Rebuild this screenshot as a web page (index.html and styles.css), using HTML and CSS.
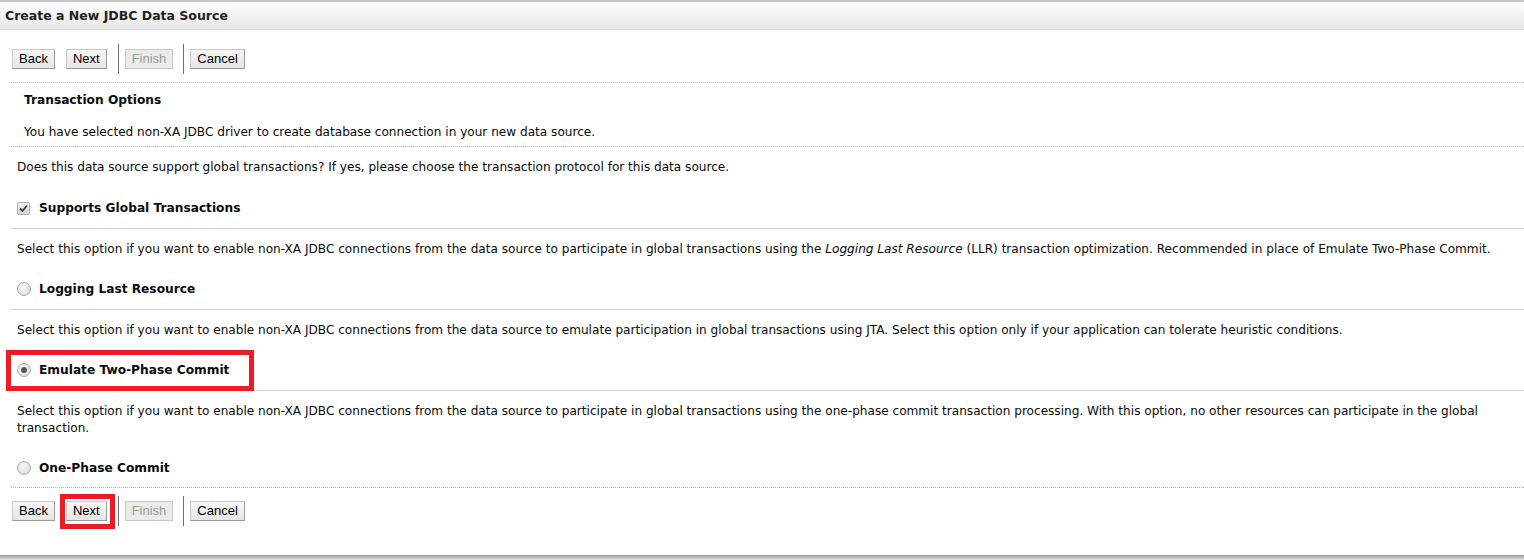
FILE: index.html
```html
<!DOCTYPE html>
<html>
<head>
<meta charset="utf-8">
<link rel="stylesheet" href="styles.css">
</head>
<body>
<div class="page">
  <div class="header"><span class="title">Create a New JDBC Data Source</span></div>
  <div class="content">
    <div class="toolbar">
      <span class="btn">Back</span>
      <span class="btn gap">Next</span>
      <span class="sep"></span>
      <span class="btn disabled">Finish</span>
      <span class="sep"></span>
      <span class="btn">Cancel</span>
    </div>
    <div class="dotted"></div>
    <div class="section-title">Transaction Options</div>
    <div class="intro">You have selected non-XA JDBC driver to create database connection in your new data source.</div>
    <div class="dotted short"></div>
    <div class="question">Does this data source support global transactions? If yes, please choose the transaction protocol for this data source.</div>

    <div class="option">
      <span class="check"><svg width="9" height="9" viewBox="0 0 9 9"><path d="M1 4.5 L3.5 7 L8 1.5" fill="none" stroke="#3a3a3a" stroke-width="1.8"/></svg></span>
      <span class="label">Supports Global Transactions</span>
    </div>
    <div class="rule"></div>
    <div class="desc">Select this option if you want to enable non-XA JDBC connections from the data source to participate in global transactions using the <i>Logging Last Resource</i> (LLR) transaction optimization. Recommended in place of Emulate Two-Phase Commit.</div>

    <div class="option">
      <span class="radio"></span>
      <span class="label">Logging Last Resource</span>
    </div>
    <div class="rule"></div>
    <div class="desc">Select this option if you want to enable non-XA JDBC connections from the data source to emulate participation in global transactions using JTA. Select this option only if your application can tolerate heuristic conditions.</div>

    <div class="option highlighted">
      <span class="radio checked"></span>
      <span class="label">Emulate Two-Phase Commit</span>
      <span class="redbox option-box"></span>
    </div>
    <div class="rule"></div>
    <div class="desc">Select this option if you want to enable non-XA JDBC connections from the data source to participate in global transactions using the one-phase commit transaction processing. With this option, no other resources can participate in the global transaction.</div>

    <div class="option">
      <span class="radio"></span>
      <span class="label">One-Phase Commit</span>
    </div>
    <div class="dotted last"></div>
    <div class="toolbar bottom">
      <span class="btn">Back</span>
      <span class="btn gap marked">Next<span class="redbox btn-box"></span></span>
      <span class="sep"></span>
      <span class="btn disabled">Finish</span>
      <span class="sep"></span>
      <span class="btn">Cancel</span>
    </div>
  </div>
</div>
<div class="shadow"></div>
</body>
</html>
```
FILE: styles.css
```css
html, body {
  margin: 0;
  padding: 0;
  background: #fff;
}
body {
  font-family: "DejaVu Sans", sans-serif;
  font-size: 12.1px;
  color: #0a0a0a;
}
.page {
  height: 555px;
  overflow: hidden;
}
.header {
  height: 27px;
  border-top: 2px solid #c4c7cb;
  border-bottom: 1px solid #dcdcdc;
  background: linear-gradient(#ffffff, #f4f4f4 40%, #e6e7e6);
  display: flex;
  align-items: center;
  padding-left: 5px;
}
.title {
  font-weight: bold;
  font-size: 12.5px;
  color: #222;
}
.content {
  padding-left: 11px;
}
.toolbar {
  display: flex;
  align-items: center;
  height: 30px;
  margin-top: 14px;
  padding-left: 1px;
}
.toolbar.bottom {
  margin-top: 8px;
}
.btn {
  position: relative;
  box-sizing: border-box;
  height: 20px;
  line-height: 18px;
  padding: 0 6px;
  font-family: "Liberation Sans", Arial, sans-serif;
  font-size: 13px;
  color: #000;
  background: linear-gradient(#f6f6f6, #e6e6e6);
  border: 1px solid #9a9a9a;
  border-top-color: #c9c9c9;
  border-left-color: #c9c9c9;
}
.btn.gap {
  margin-left: 11px;
}
.btn.disabled {
  color: #9a9a9a;
  background: #ebebe9;
  border-color: #c8c8c8;
}
.sep {
  width: 1px;
  height: 30px;
  background: #6e6e6e;
  margin: 0 6px 0 11px;
}
.btn.disabled + .sep {
  margin-left: 10px;
}
.dotted {
  height: 0;
  border-top: 1px dotted #b4b4b4;
  margin-top: 8px;
}
.dotted.short {
  margin-top: 5px;
}
.dotted.last {
  margin-top: 9px;
}
.section-title {
  font-weight: bold;
  line-height: 17px;
  margin-top: 9px;
  padding-left: 13px;
  font-size: 12.2px;
}
.intro {
  line-height: 17px;
  margin-top: 15px;
  padding-left: 13px;
}
.question {
  line-height: 17px;
  margin-top: 12px;
  padding-left: 6px;
}
.option {
  position: relative;
  display: flex;
  align-items: center;
  height: 20px;
  margin-top: 21px;
  padding-left: 6px;
}
.question + .option {
  margin-top: 22px;
}
.label {
  font-weight: bold;
  font-size: 12.2px;
  margin-left: 8px;
}
.check + .label {
  margin-left: 9px;
}
.check {
  box-sizing: border-box;
  width: 13px;
  height: 13px;
  border: 1px solid #b4b4b4;
  border-radius: 2px;
  background: linear-gradient(#f2f2f2, #d4d4d4);
  display: flex;
  align-items: center;
  justify-content: center;
}
.radio {
  box-sizing: border-box;
  width: 14px;
  height: 14px;
  border: 1px solid #a9a9a9;
  border-radius: 50%;
  background: radial-gradient(circle at 40% 35%, #fafafa, #d6d6d6);
  display: flex;
  align-items: center;
  justify-content: center;
}
.radio.checked::after {
  content: "";
  width: 6px;
  height: 6px;
  border-radius: 50%;
  background: #555;
}
.rule {
  height: 0;
  border-top: 1px solid #cfcfcf;
  margin-top: 10px;
}
.rule + .desc {
  margin-top: 12px;
}
.desc {
  line-height: 17px;
  padding-left: 6px;
  padding-right: 24px;
}
.redbox {
  position: absolute;
  box-sizing: border-box;
  border: 5px solid #ec1c24;
  pointer-events: none;
}
.option-box {
  left: -5px;
  top: -10px;
  width: 248px;
  height: 41px;
}
.btn-box {
  left: -7px;
  top: -8px;
  width: 55px;
  height: 35px;
}
.shadow {
  height: 5px;
  background: linear-gradient(#9a9a9a, #bdbdbd 50%, #e6e6e6);
}
```
